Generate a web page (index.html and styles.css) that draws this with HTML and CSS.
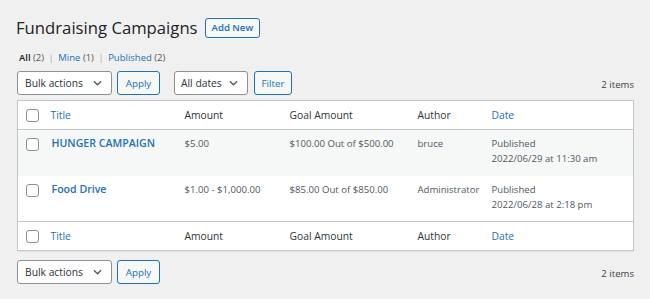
FILE: index.html
```html
<!DOCTYPE html>
<html>
<head>
<meta charset="utf-8">
<link rel="stylesheet" href="styles.css">
</head>
<body>
<div class="wrap">
  <div class="heading">
    <h1>Fundraising Campaigns</h1>
    <a class="add-new">Add New</a>
  </div>
  <ul class="subsubsub">
    <li class="current">All <span class="count">(2)</span></li>
    <li class="sep">|</li>
    <li><a>Mine</a> <span class="count">(1)</span></li>
    <li class="sep">|</li>
    <li><a>Published</a> <span class="count">(2)</span></li>
  </ul>
  <div class="tablenav top">
    <div class="actions">
      <div class="select w-bulk"><span>Bulk actions</span><svg viewBox="0 0 10 6" class="chev"><path d="M1 1l4 4 4-4"/></svg></div>
      <div class="btn">Apply</div>
    </div>
    <div class="actions">
      <div class="select w-dates"><span>All dates</span><svg viewBox="0 0 10 6" class="chev"><path d="M1 1l4 4 4-4"/></svg></div>
      <div class="btn">Filter</div>
    </div>
    <div class="items">2 items</div>
  </div>
  <table class="list">
    <colgroup>
      <col class="c-cb"><col class="c-title"><col class="c-amount"><col class="c-goal"><col class="c-author"><col class="c-date">
    </colgroup>
    <thead>
      <tr><td class="cb"><span class="check"></span></td><th class="link">Title</th><th>Amount</th><th>Goal Amount</th><th>Author</th><th class="link">Date</th></tr>
    </thead>
    <tbody>
      <tr class="alt"><td class="cb"><span class="check"></span></td><td class="title">HUNGER CAMPAIGN</td><td>$5.00</td><td>$100.00 Out of $500.00</td><td>bruce</td><td>Published<br>2022/06/29 at 11:30 am</td></tr>
      <tr><td class="cb"><span class="check"></span></td><td class="title">Food Drive</td><td>$1.00 - $1,000.00</td><td>$85.00 Out of $850.00</td><td>Administrator</td><td>Published<br>2022/06/28 at 2:18 pm</td></tr>
    </tbody>
    <tfoot>
      <tr><td class="cb"><span class="check"></span></td><th class="link">Title</th><th>Amount</th><th>Goal Amount</th><th>Author</th><th class="link">Date</th></tr>
    </tfoot>
  </table>
  <div class="tablenav bottom">
    <div class="actions">
      <div class="select w-bulk"><span>Bulk actions</span><svg viewBox="0 0 10 6" class="chev"><path d="M1 1l4 4 4-4"/></svg></div>
      <div class="btn">Apply</div>
    </div>
    <div class="items">2 items</div>
  </div>
</div>
</body>
</html>
```
FILE: styles.css
```css
* { box-sizing: border-box; }
body {
  margin: 0;
  background: #f0f0f1;
  color: #3c434a;
  font-family: "Open Sans", "Noto Sans", sans-serif;
  font-size: 10px;
}
.wrap { padding: 14px 0 0 17px; width: 634px; }
.heading { display: flex; align-items: center; gap: 7px; height: 27px; }
h1 {
  margin: 0 0 0 -1px;
  font-size: 16.7px;
  font-weight: 400;
  color: #1d2327;
}
.add-new {
  display: inline-flex; align-items: center;
  height: 20px; padding: 0 6px;
  border: 1px solid #2271b1; border-radius: 3px;
  background: #f6f7f7; color: #2271b1;
  font-size: 9.6px; font-weight: 600;
}
.subsubsub {
  list-style: none; margin: 10px 0 0 2px; padding: 0;
  display: flex; gap: 3.5px; font-size: 9.5px; color: #50575e; height: 13px; align-items: center;
}
.subsubsub a { color: #2271b1; }
.subsubsub .current { color: #1d2327; font-weight: 600; }
.subsubsub .current .count { font-weight: 400; color: #50575e; }
.sep { color: #a7aaad; padding: 0 1px; }
.tablenav { display: flex; align-items: center; height: 24px; }
.tablenav.top { margin-top: 7px; margin-bottom: 5px; }
.tablenav.bottom { margin-top: 9px; }
.actions { display: flex; gap: 5px; margin-right: 14px; }
.actions + .actions { gap: 6px; }
.select {
  height: 24px; border: 1px solid #8c8f94; border-radius: 3px; background: #fff;
  display: flex; align-items: center; justify-content: space-between;
  padding: 0 9px 0 7px; font-size: 10.3px; color: #2c3338;
}
.w-bulk { width: 95px; }
.w-dates { width: 74px; padding-left: 6px; }
.chev { width: 9px; height: 6px; fill: none; stroke: #50575e; stroke-width: 1.4; }
.btn {
  height: 24px; border: 1px solid #2271b1; border-radius: 3px; background: #f6f7f7;
  color: #2271b1; display: flex; align-items: center; justify-content: center; font-size: 9.8px;
}
.actions .btn { width: 43px; }
.actions + .actions .btn { width: 38px; }
.items { margin-left: auto; font-size: 9.6px; color: #3c434a; padding-top: 2px; }
.list {
  width: 617px; border: 1px solid #c3c4c7; border-collapse: collapse; background: #fff;
  table-layout: fixed;
  box-shadow: 0 1px 1px rgba(0,0,0,.04);
}
.c-cb { width: 25px; } .c-title { width: 134px; } .c-amount { width: 105px; }
.c-goal { width: 128px; } .c-author { width: 74px; } .c-date { width: auto; }
th, td { text-align: left; font-weight: 400; padding: 0 8px; vertical-align: top; }
thead tr, tfoot tr { height: 29px; }
thead th, tfoot th, thead td, tfoot td { vertical-align: middle; color: #2c3338; font-size: 10.3px; }
thead tr { border-bottom: 1px solid #c3c4c7; }
tfoot tr { border-top: 1px solid #c3c4c7; }
th.link { color: #2271b1; }
tbody td { padding-top: 6px; line-height: 15px; color: #50575e; font-size: 9.6px; }
tbody tr { height: 46px; }
tbody tr.alt { background: #f6f7f7; }
td.cb { padding: 0 0 0 8px; }
tbody td.cb { padding-top: 8px; }
.check {
  display: block; width: 13px; height: 13px; border: 1px solid #8c8f94; border-radius: 3px; background: #fff;
}
td.title { font-weight: 600; color: #2271b1; font-size: 10.6px; padding-left: 9px; }
```
